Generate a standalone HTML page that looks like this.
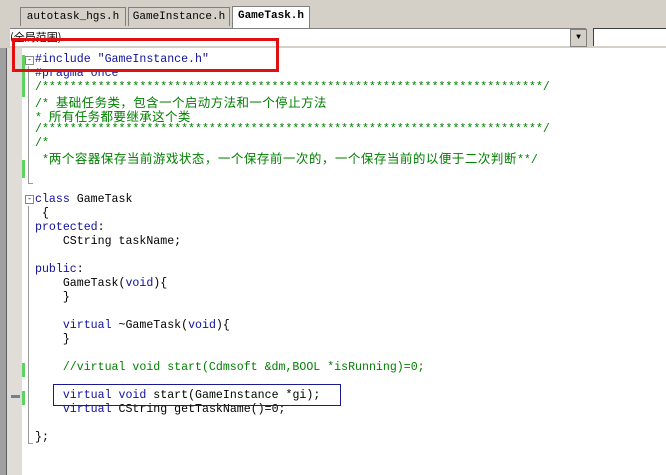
<!DOCTYPE html><html><head><style>
body{margin:0;width:666px;height:475px;overflow:hidden;background:#fff;position:relative;font-family:"Liberation Mono","Noto Sans CJK SC",monospace}
.a{position:absolute}
.l{position:absolute;left:35px;font-size:11.6px;line-height:14px;white-space:pre;color:#000}
.k{color:#1010a0}
.c{color:#008000}
.z{font-family:"Noto Sans CJK SC",sans-serif;font-size:12.5px;letter-spacing:0.4px}
.g{position:absolute;left:22px;width:3px;background:#5fd35f}
</style></head><body>
<div class="a" style="left:0;top:0;width:666px;height:28px;background:#d4d0c8;border-bottom:1px solid #808080"></div>
<div class="a" style="left:20px;top:7px;width:104px;height:18px;background:#d4d0c8;border:1px solid #808080;border-bottom:none;font:11px 'Liberation Mono';line-height:18px;text-align:center">autotask_hgs.h</div>
<div class="a" style="left:128px;top:7px;width:100px;height:18px;background:#d4d0c8;border:1px solid #808080;border-bottom:none;font:11px 'Liberation Mono';line-height:18px;text-align:center">GameInstance.h</div>
<div class="a" style="left:232px;top:6px;width:76px;height:21px;background:#fff;border:1px solid #808080;border-bottom:none;font:bold 11px 'Liberation Mono';line-height:18px;text-align:center">GameTask.h</div>
<div class="a" style="left:0;top:28px;width:666px;height:20px;background:#d4d0c8"></div>
<div class="a" style="left:10px;top:28px;width:576px;height:17px;background:#fff;border-top:1px solid #808080;font-family:'Noto Sans CJK SC';font-size:11px;line-height:16px">(全局范围)</div>
<div class="a" style="left:570px;top:29px;width:15px;height:16px;background:#d4d0c8;border:1px solid #808080;font-size:8px;text-align:center;line-height:16px">▼</div>
<div class="a" style="left:593px;top:28px;width:73px;height:17px;background:#fff;border-top:1px solid #404040;border-left:1px solid #404040"></div>
<div class="a" style="left:0;top:48px;width:6px;height:427px;background:#a0a0a0;border-right:1px solid #606060"></div>
<div class="a" style="left:7px;top:48px;width:15px;height:427px;background:#e0ddd8"></div>
<div class="g" style="top:55px;height:42px"></div>
<div class="g" style="top:160px;height:18px"></div>
<div class="g" style="top:363px;height:14px"></div>
<div class="g" style="top:391px;height:14px"></div>
<div class="a" style="left:11px;top:395px;width:9px;height:3px;background:#708090"></div>
<div class="a" style="left:28px;top:66px;width:1px;height:118px;background:#999"></div>
<div class="a" style="left:28px;top:183px;width:5px;height:1px;background:#999"></div>
<div class="a" style="left:28px;top:206px;width:1px;height:238px;background:#999"></div>
<div class="a" style="left:28px;top:443px;width:5px;height:1px;background:#999"></div>
<div class="a" style="left:25px;top:56px;width:7px;height:7px;border:1px solid #888;font-size:8px;line-height:7px;text-align:center">-</div>
<div class="a" style="left:25px;top:195px;width:7px;height:7px;border:1px solid #888;font-size:8px;line-height:7px;text-align:center">-</div>
<div class="l k" style="top:53px">#include "GameInstance.h"</div>
<div class="l k" style="top:67px">#pragma once</div>
<div class="l c" style="top:81px">/************************************************************************/</div>
<div class="l c" style="top:95px">/* <span class="z">基础任务类，包含一个启动方法和一个停止方法</span></div>
<div class="l c" style="top:109px">* <span class="z">所有任务都要继承这个类</span></div>
<div class="l c" style="top:123px">/************************************************************************/</div>
<div class="l c" style="top:137px">/*</div>
<div class="l c" style="top:151px"> *<span class="z" style="letter-spacing:0.5px">两个容器保存当前游戏状态，一个保存前一次的，一个保存当前的以便于二次判断</span>**/</div>
<div class="l" style="top:193px"><span class="k">class</span> GameTask</div>
<div class="l" style="top:207px"> {</div>
<div class="l" style="top:221px"><span class="k">protected</span>:</div>
<div class="l" style="top:235px">    CString taskName;</div>
<div class="l" style="top:263px"><span class="k">public</span>:</div>
<div class="l" style="top:277px">    GameTask(<span class="k">void</span>){</div>
<div class="l" style="top:291px">    }</div>
<div class="l" style="top:319px">    <span class="k">virtual</span> ~GameTask(<span class="k">void</span>){</div>
<div class="l" style="top:333px">    }</div>
<div class="l c" style="top:361px">    //virtual void start(Cdmsoft &amp;dm,BOOL *isRunning)=0;</div>
<div class="l" style="top:389px">    <span class="k">virtual void</span> start(GameInstance *gi);</div>
<div class="l" style="top:403px">    <span class="k">virtual</span> CString getTaskName()=0;</div>
<div class="l" style="top:431px">};</div>
<div class="a" style="left:12px;top:38px;width:261px;height:28px;border:3px solid #e01010"></div>
<div class="a" style="left:53px;top:384px;width:286px;height:20px;border:1px solid #1a1a90"></div>
</body></html>
